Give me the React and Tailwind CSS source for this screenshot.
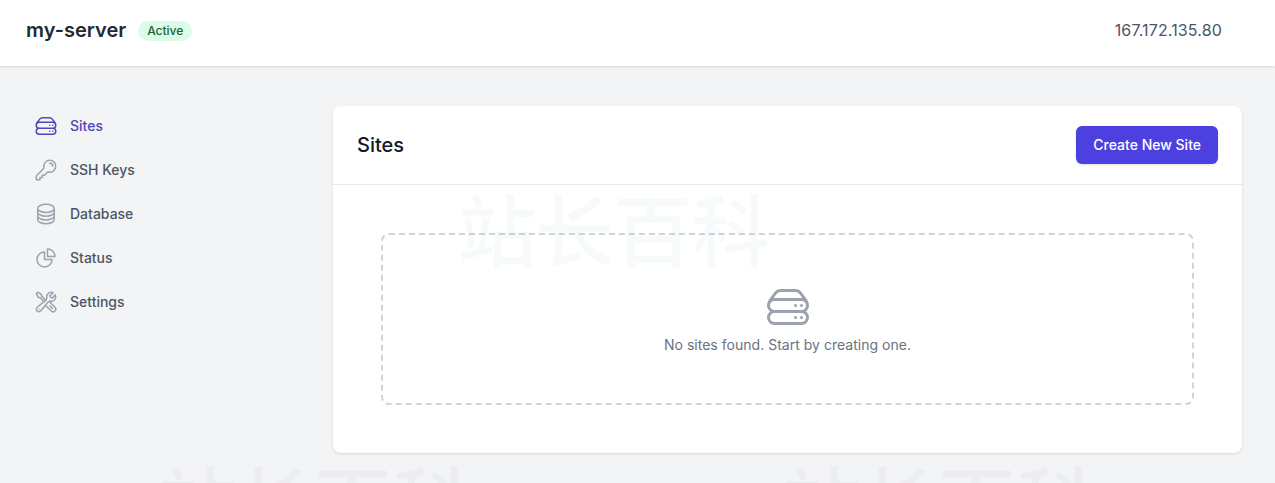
import React from "react";
import {
  HiOutlineServerStack,
  HiOutlineKey,
  HiOutlineCircleStack,
  HiOutlineChartPie,
  HiOutlineWrenchScrewdriver,
} from "react-icons/hi2";

const nav = [
  { label: "Sites", Icon: HiOutlineServerStack, active: true },
  { label: "SSH Keys", Icon: HiOutlineKey },
  { label: "Database", Icon: HiOutlineCircleStack },
  { label: "Status", Icon: HiOutlineChartPie },
  { label: "Settings", Icon: HiOutlineWrenchScrewdriver },
];

function Watermark({ className }) {
  return (
    <div
      className={
        "pointer-events-none absolute whitespace-nowrap text-[78px] leading-none font-['Noto_Sans_CJK_SC',sans-serif] font-medium select-none " +
        className
      }
    >
      站长百科
    </div>
  );
}

export default function App() {
  return (
    <div className="relative h-[483px] overflow-hidden bg-[#f3f4f6] font-['Inter',sans-serif]">
      <Watermark className="left-[158px] top-[460px] text-[#ecedf1]" />
      <Watermark className="left-[782px] top-[460px] text-[#ecedf1]" />
      <header className="relative flex h-[66px] items-center justify-between bg-white pb-1.5 pl-[26px] pr-[53px] shadow-sm">
        <div className="flex items-center gap-3">
          <h1 className="text-xl font-semibold text-[#1f2937]">my-server</h1>
          <span className="mt-px rounded-full bg-[#dcfce7] px-[9px] py-0.5 text-xs font-medium leading-4 text-[#166534]">
            Active
          </span>
        </div>
        <div className="text-base tracking-[0.15px] text-[#4b5563]">167.172.135.80</div>
      </header>
      <main className="relative flex pl-[34px] pr-[33px] pt-10">
        <nav className="flex w-[299px] shrink-0 flex-col gap-5 pt-2">
          {nav.map(({ label, Icon, active }) => (
            <a
              key={label}
              className={
                "flex h-6 items-center gap-3 text-sm font-medium " +
                (active ? "text-[#4f46b8]" : "text-[#4b5563]")
              }
            >
              <Icon className={"h-6 w-6 " + (active ? "text-[#4f46b8]" : "text-[#9ca3af]")} />
              {label}
            </a>
          ))}
        </nav>
        <section className="flex-1 rounded-lg bg-white shadow-sm">
          <div className="flex h-[79px] items-center justify-between border-b border-[#e5e7eb] px-6">
            <h2 className="text-xl font-medium text-[#111827]">Sites</h2>
            <button className="h-[38px] rounded-md bg-[#4c41e0] px-[17px] text-sm font-medium text-white shadow-sm">
              Create New Site
            </button>
          </div>
          <div className="px-12 pt-12 pb-12">
            <div className="flex h-[172px] flex-col items-center justify-center rounded-lg border-2 border-dashed border-[#d1d5db]">
              <HiOutlineServerStack className="h-12 w-12 text-[#9ca3af]" />
              <p className="mt-1 text-sm tracking-[0.02px] text-[#6b7280]">No sites found. Start by creating one.</p>
            </div>
          </div>
        </section>
      </main>
      <Watermark className="left-[458px] top-[188px] text-[#0e7490]/[0.035]" />
    </div>
  );
}
